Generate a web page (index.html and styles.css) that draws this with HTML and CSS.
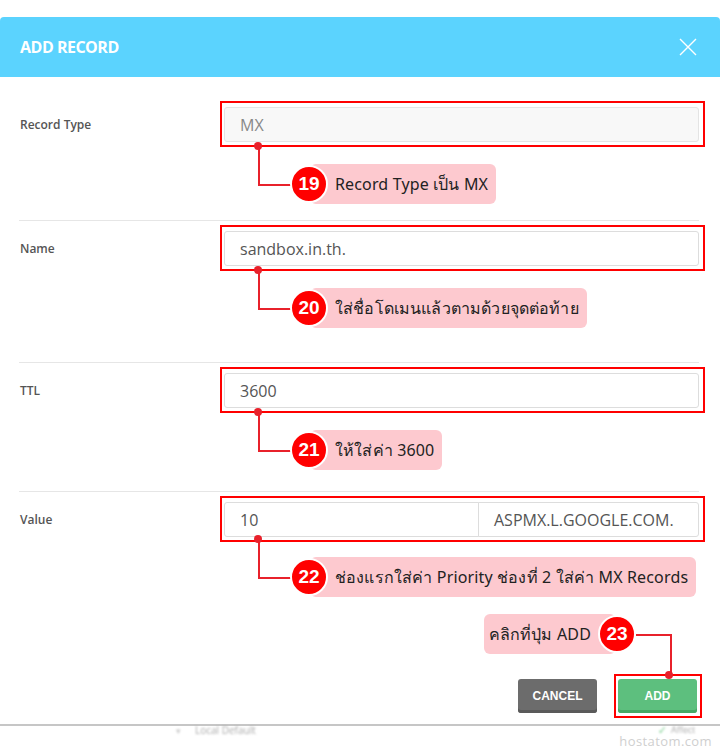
FILE: index.html
```html
<!DOCTYPE html>
<html lang="th">
<head>
<meta charset="utf-8">
<title>Add Record</title>
<link rel="stylesheet" href="styles.css">
</head>
<body>
<div class="modal">
  <div class="head">
    <span class="title">ADD RECORD</span>
    <svg class="close" width="18" height="18" viewBox="0 0 18 18"><path d="M1 1 L17 17 M17 1 L1 17" stroke="#fff" stroke-width="1.4" fill="none"/></svg>
  </div>
  <div class="form">
    <div class="row r1">
      <div class="label">Record Type</div>
      <div class="field">
        <div class="hl"><div class="input disabled">MX</div></div>
        <div class="callout"><span class="badge">19</span><span class="pill">Record Type เป็น MX</span></div>
      </div>
    </div>
    <div class="row r2">
      <div class="label">Name</div>
      <div class="field">
        <div class="hl"><div class="input">sandbox.in.th.</div></div>
        <div class="callout"><span class="badge">20</span><span class="pill">ใส่ชื่อโดเมนแล้วตามด้วยจุดต่อท้าย</span></div>
      </div>
    </div>
    <div class="row r3">
      <div class="label">TTL</div>
      <div class="field">
        <div class="hl"><div class="input">3600</div></div>
        <div class="callout"><span class="badge">21</span><span class="pill">ให้ใส่ค่า 3600</span></div>
      </div>
    </div>
    <div class="row r4">
      <div class="label">Value</div>
      <div class="field">
        <div class="hl"><div class="group"><div class="input prio">10</div><div class="input mx">ASPMX.L.GOOGLE.COM.</div></div></div>
        <div class="callout"><span class="badge">22</span><span class="pill">ช่องแรกใส่ค่า Priority ช่องที่ 2 ใส่ค่า MX Records</span></div>
      </div>
    </div>
  </div>
  <div class="actions">
    <div class="callout right"><span class="pill">คลิกที่ปุ่ม ADD</span><span class="badge">23</span></div>
    <div class="buttons">
      <button class="btn cancel">CANCEL</button>
      <div class="hl btn-hl"><button class="btn add">ADD</button></div>
    </div>
  </div>
  <div class="under">
    <span class="caret">▾</span><span class="blur">Local Default</span>
    <span class="check">✓</span><span class="blur affect">Affect</span>
  </div>
  <div class="mark">hostatom.com</div>
</div>
</body>
</html>
```

FILE: styles.css
```css
* { box-sizing: border-box; }
html, body { margin: 0; padding: 0; background: #fff; }
body { font-family: "Open Sans", "Noto Sans", "DejaVu Sans", sans-serif; color: #333; }

.modal { width: 720px; height: 749px; padding-top: 17px; position: relative; overflow: hidden; }

.head {
  height: 60px; background: #5bd3fe; border-radius: 4px 4px 0 0;
  display: flex; align-items: center; justify-content: space-between;
  padding: 0 23px 0 20px;
}
.title { color: #fff; font-weight: 700; font-size: 16px; letter-spacing: -0.5px; }
.close { display: block; }

.form { margin: 0 21px 0 19px; }
.row { display: grid; grid-template-columns: 201px 485px; }
.row + .row { border-top: 1px solid #e6e6e6; }
.r1 { padding: 24px 0 16px; }
.r2 { padding: 4px 0 34px; }
.r3 { padding: 4px 0 21px; }
.r4 { padding: 4px 0 0; }
.r4 .callout { margin-top: 15px; }

.label {
  height: 46px; display: flex; align-items: center; padding-left: 1px;
  font-size: 12px; font-weight: 600; color: #555;
}

.hl { border: 2px solid #f00; padding: 4px 4px 3px 2px; }
.input {
  height: 35px; border: 1px solid #ddd; border-radius: 3px; background: #fff;
  padding: 0 15px; display: flex; align-items: center;
  font-size: 16px; color: #555;
}
.input.disabled { background: #f8f8f8; color: #888; border-color: #e4e4e4; }
.group { display: flex; }
.group .prio { width: 255px; border-radius: 3px 0 0 3px; }
.group .mx { flex: 1; border-radius: 0 3px 3px 0; margin-left: -1px; }

.callout {
  margin-top: 17px; margin-left: 70px; height: 40px;
  display: flex; align-items: center; position: relative; width: max-content;
}
.callout::before {
  content: ""; position: absolute; left: -32px; top: -17px; width: 33px; height: 37px;
  border-left: 2px solid #e8212b; border-bottom: 2px solid #e8212b;
}
.callout::after {
  content: ""; position: absolute; left: -36px; top: -22px; width: 8px; height: 8px;
  border-radius: 50%; background: #e8212b;
}
.badge {
  position: relative; z-index: 1; flex: none;
  width: 38px; height: 38px; border-radius: 50%; border: 2px solid #fff;
  background: #f00; color: #fff; font-weight: 700; font-size: 19px;
  display: flex; align-items: center; justify-content: center;
  font-family: "Liberation Sans", Arial, sans-serif;
}
.pill {
  height: 40px; line-height: 40px; background: #fdc9cf; border-radius: 6px;
  margin-left: -18px; padding: 0 8px 0 25px;
  font-size: 16px; color: #222; font-family: "Noto Sans", "DejaVu Sans", sans-serif;
  letter-spacing: 0.15px;
}

.actions { padding-top: 17px; }
.callout.right { margin: 0 84px 0 auto; }
.callout.right .pill { margin-left: 0; margin-right: -18px; padding: 0 25px 0 5px; }
.callout.right::before {
  left: 100%; top: 20px; width: 34px; height: 41px;
  border-left: none; border-bottom: none;
  border-top: 2px solid #e8212b; border-right: 2px solid #e8212b;
}
.callout.right::after { left: calc(100% + 29px); top: 57px; }

.buttons {
  margin-top: 20px; display: flex; justify-content: flex-end; align-items: center;
  padding-right: 18px;
}
.btn {
  width: 79px; height: 34px; border: none; border-radius: 3px; color: #fff;
  font-family: "Liberation Sans", Arial, sans-serif; font-weight: 700; font-size: 12px;
  display: block; padding: 0;
}
.cancel { background: #6c6c6c; box-shadow: inset 0 -3px 0 #5a5a5a; margin-right: 17px; }
.add { background: #5dbf7e; box-shadow: inset 0 -3px 0 #47a866; }
.btn-hl { padding: 3px 3px 3px 2px; }

.under {
  margin-top: 6px; border-top: 2px solid #c6c6c6; height: 24px;
  display: flex; align-items: flex-start; padding-top: 0;
  font-size: 10px; line-height: 9px; color: #aaa;
}
.blur { filter: blur(0.8px); }
.caret { margin-left: 176px; width: 19px; color: #ccc; font-size: 9px; filter: blur(0.8px); }
.check { margin-left: 402px; color: #7ccf8f; font-size: 11px; line-height: 8px; filter: blur(0.8px); }
.affect { margin-left: 4px; font-size: 9px; line-height: 8px; }

.mark {
  position: absolute; right: 8px; bottom: 2px; line-height: 12px;
  font-size: 13px; color: #cfcfcf; letter-spacing: 0.4px;
}
```
